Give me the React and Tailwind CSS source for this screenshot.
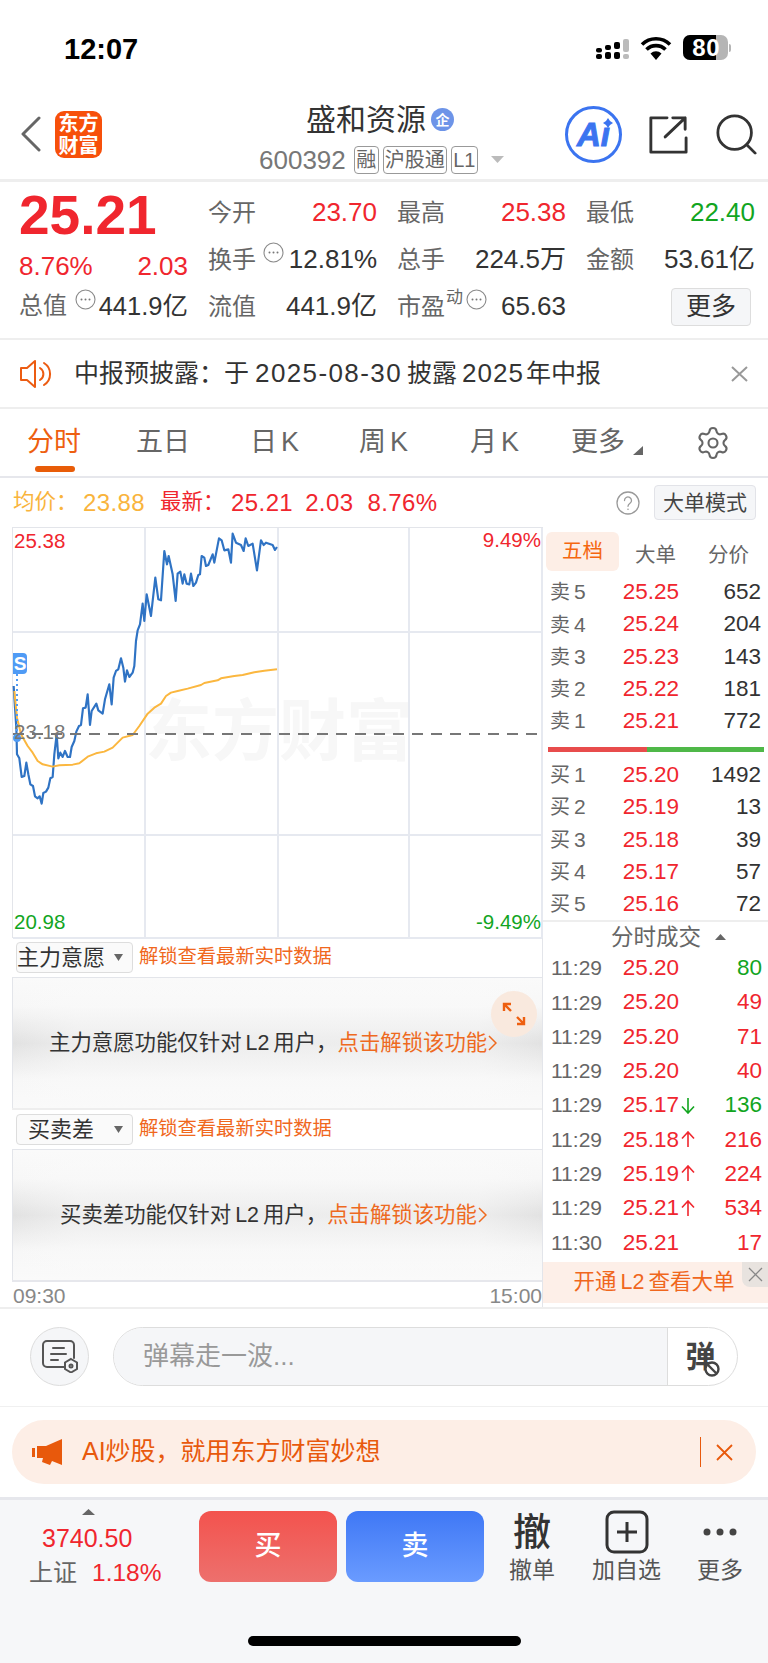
import { Settings } from 'lucide-react';

const RED = 'text-[#f0262e]';
const GREEN = 'text-[#12a51f]';

const SELLS = [
  ['卖', '5', '25.25', '652'],
  ['卖', '4', '25.24', '204'],
  ['卖', '3', '25.23', '143'],
  ['卖', '2', '25.22', '181'],
  ['卖', '1', '25.21', '772'],
];
const BUYS = [
  ['买', '1', '25.20', '1492'],
  ['买', '2', '25.19', '13'],
  ['买', '3', '25.18', '39'],
  ['买', '4', '25.17', '57'],
  ['买', '5', '25.16', '72'],
];
const TRADES = [
  ['11:29', '25.20', '', '80', 'g'],
  ['11:29', '25.20', '', '49', 'r'],
  ['11:29', '25.20', '', '71', 'r'],
  ['11:29', '25.20', '', '40', 'r'],
  ['11:29', '25.17', 'd', '136', 'g'],
  ['11:29', '25.18', 'u', '216', 'r'],
  ['11:29', '25.19', 'u', '224', 'r'],
  ['11:29', '25.21', 'u', '534', 'r'],
  ['11:30', '25.21', '', '17', 'r'],
];

// traced from the reference, in crop coordinates (see transform on the <g>)
const BLUE_LINE = '38,495 42,560 46,620 48,700 55,712 62,768 70,765 76,725 82,760 88,790 96,795 102,826 110,832 116,826 122,848 127,816 135,812 142,800 148,772 155,768 160,700 167,640 172,712 178,695 185,708 192,690 200,708 207,708 212,678 220,660 226,632 234,615 240,612 246,562 254,560 260,520 267,612 272,570 286,548 292,568 305,578 312,535 325,490 332,550 338,470 345,450 352,445 360,412 367,440 372,482 378,448 385,468 395,455 400,435 405,360 410,328 417,310 425,248 430,300 437,220 450,285 463,170 472,235 480,238 490,90 498,130 503,105 515,160 524,240 530,158 538,152 545,188 550,160 557,188 565,190 570,158 577,195 585,185 592,162 597,160 602,105 610,110 615,135 622,132 635,100 640,125 654,52 662,58 670,88 682,85 690,125 695,38 705,65 720,72 728,90 734,52 742,75 755,68 768,148 780,58 788,72 795,65 815,72 822,87 828,78';
const AVG_LINE = '40,510 48,590 60,640 80,675 95,695 110,720 125,730 155,737 175,733 215,731 235,727 262,706 285,697 310,692 335,680 365,650 395,642 415,615 440,578 460,560 480,548 495,525 510,515 530,510 560,503 600,492 610,486 650,478 660,472 700,465 725,462 760,454 790,449 828,445';

const Dots = ({ className = '' }) => (
  <svg width="21" height="21" viewBox="0 0 21 21" className={`shrink-0 ${className}`}>
    <circle cx="10.5" cy="10.5" r="9.5" fill="none" stroke="#8a8a8a" strokeWidth="1.1" />
    <circle cx="6.5" cy="10.5" r="1" fill="#777" />
    <circle cx="10.5" cy="10.5" r="1" fill="#777" />
    <circle cx="14.5" cy="10.5" r="1" fill="#777" />
  </svg>
);

const Stat = ({ label, children, value, color = 'text-[#333]' }) => (
  <div className="flex h-[47px] items-center">
    <span className="text-[24px] text-[#666]">{label}</span>
    {children}
    <span className={`ml-auto text-[26px] ${color}`}>{value}</span>
  </div>
);

const Tag = ({ children, className = '' }) => (
  <span className={`flex h-[28px] items-center justify-center rounded-[4px] border border-[#999] text-[20px] text-[#666] ${className}`}>
    {children}
  </span>
);

const BookRow = ({ row }) => (
  <div className="flex h-[32.2px] items-center pl-[7px] pr-[7px]">
    <span className="w-[71px] text-[20px] text-[#666]">
      {row[0]}
      <span className="ml-[4px] text-[21px]">{row[1]}</span>
    </span>
    <span className={`w-[58px] text-right text-[22.500px] ${RED}`}>{row[2]}</span>
    <span className="flex-1 text-right text-[22.500px] text-[#333]">{row[3]}</span>
  </div>
);

const TradeRow = ({ row }) => (
  <div className="flex h-[34.3px] items-center pl-[8px] pr-[6px]">
    <span className="w-[64px] text-[21px] text-[#666]">{row[0]}</span>
    <span className={`w-[64px] text-right text-[22.500px] ${RED}`}>{row[1]}</span>
    <span className="flex w-[17px] justify-center">
      {row[2] === 'd' && (
        <svg width="14" height="17" viewBox="0 0 14 17" fill="none" stroke="#12a51f" strokeWidth="1.6">
          <path d="M7 1v15M1 9.500 7 16l6-6.500" />
        </svg>
      )}
      {row[2] === 'u' && (
        <svg width="14" height="17" viewBox="0 0 14 17" fill="none" stroke="#f0262e" strokeWidth="1.6">
          <path d="M7 16V1M1 7.500 7 1l6 6.500" />
        </svg>
      )}
    </span>
    <span className={`flex-1 text-right text-[22.500px] ${row[4] === 'g' ? GREEN : RED}`}>{row[3]}</span>
  </div>
);

const Caret = () => (
  <svg width="9" height="7" viewBox="0 0 9 7" className="ml-[9px] shrink-0">
    <path d="M0 0h9L4.500 7z" fill="#666" />
  </svg>
);

const LockedPanel = ({ name, before, after, indent, children }) => (
  <>
    <div className="flex h-[39px] items-center pl-[4px]">
      <div className="flex h-[31px] w-[117px] items-center rounded-[4px] border border-[#ddd] bg-[#fafafa]">
        <span className="w-[88px] text-center text-[22px] leading-none text-[#333]">{name}</span>
        <Caret />
      </div>
      <span className="ml-[6px] text-[19.300px] text-[#f0671d]">解锁查看最新实时数据</span>
    </div>
    <div className={`relative flex h-[131px] items-center border-l border-t border-[#e3e5ea] bg-[linear-gradient(to_right,rgba(250,250,250,0)_0%,rgba(250,250,250,0.45)_12%,rgba(250,250,250,0.45)_88%,rgba(250,250,250,0)_100%),linear-gradient(to_bottom,#fafafa_0%,#f7f7f7_22%,#e2e2e2_50%,#f7f7f7_78%,#fafafa_100%)] ${indent}`}>
      <span className="text-[21.400px] text-[#333]">
        {before}
        <span className="mx-[4px]">L2</span>
        {after}
      </span>
      <span className="flex items-center text-[21.400px] text-[#ee6a1f]">
        点击解锁该功能
        <svg width="9" height="20" viewBox="0 0 9 20" fill="none" stroke="#ee6a1f" strokeWidth="1.500" className="ml-[1px]">
          <path d="m1 3 7 7-7 7" />
        </svg>
      </span>
      {children}
    </div>
  </>
);

const BarAction = ({ icon, label, className = '' }) => (
  <div className={`flex flex-col items-center ${className}`}>
    <div className="flex h-[46px] items-center justify-center">{icon}</div>
    <span className="text-[23px] leading-[30px] text-[#555]">{label}</span>
  </div>
);

export default function App() {
  return (
    <div className="flex h-[1663px] w-[768px] flex-col overflow-hidden bg-white [font-family:'Liberation_Sans','Noto_Sans_CJK_SC',sans-serif]">
      {/* Status bar */}
      <div className="flex h-[90px] shrink-0 items-start pl-[64px] pt-[31px]">
        <span className="text-[29px] font-bold leading-[36px] text-black">12:07</span>
        <div className="ml-auto mr-[37px] mt-[4px] flex items-center">
          <svg width="34" height="20" viewBox="0 0 34 20" className="mt-[3px]">
            <g fill="#000">
              <rect x="0" y="9" width="6" height="4.500" rx="2" />
              <rect x="0" y="15" width="6" height="5" rx="2" />
              <rect x="9" y="6" width="6" height="5" rx="2" />
              <rect x="9" y="13" width="6" height="7" rx="2" />
              <rect x="18" y="3" width="6" height="7" rx="2" />
              <rect x="18" y="13" width="6" height="7" rx="2" />
            </g>
            <g fill="#bbb">
              <rect x="27" y="0" width="6" height="13" rx="2" />
              <rect x="27" y="15" width="6" height="5" rx="2" />
            </g>
          </svg>
          <svg width="32" height="24" viewBox="0 0 32 24" className="ml-[10px]">
            <path d="M16 24 10.500 17.500a8 8 0 0 1 11 0z" fill="#000" />
            <path d="M6.500 13.500a13.500 13.500 0 0 1 19 0" fill="none" stroke="#000" strokeWidth="3.600" />
            <path d="M2 8.500a20 20 0 0 1 28 0" fill="none" stroke="#000" strokeWidth="3.600" />
          </svg>
          <div className="ml-[11px] flex h-[25px] w-[45px] overflow-hidden rounded-[7px] bg-[#b5b5b5]">
            <div className="flex w-[33px] items-center justify-end overflow-visible bg-black">
              <span className="relative z-10 -mr-[4px] text-[24px] font-bold leading-none tracking-[0.5px] text-white">80</span>
            </div>
          </div>
          <div className="ml-[1px] h-[8px] w-[2px] rounded-r bg-[#b5b5b5]" />
        </div>
      </div>

      {/* Header */}
      <div className="flex h-[92px] shrink-0 items-center border-b-[3px] border-[#eeeeee]">
        <svg width="22" height="36" viewBox="0 0 22 36" fill="none" stroke="#666" strokeWidth="3" className="ml-[20px] -mt-[2px]">
          <path d="M19 2 3 18l16 16" strokeLinecap="round" strokeLinejoin="round" />
        </svg>
        <div className="ml-[13px] flex h-[47px] w-[47px] flex-col items-center justify-center rounded-[9px] bg-[#f7500a] text-[20px] font-bold leading-[22px] text-white">
          <span>东方</span>
          <span>财富</span>
        </div>
        <div className="ml-[157px] mt-[7px] flex w-[306px] flex-col items-start">
          <div className="ml-[47px] flex items-center">
            <span className="text-[30px] leading-[36px] text-[#333]">盛和资源</span>
            <span className="ml-[5px] flex h-[23px] w-[23px] items-center justify-center rounded-full bg-[#6d94e8] text-[14px] font-bold leading-none text-white">企</span>
          </div>
          <div className="mt-[7px] flex items-center">
            <span className="text-[26px] leading-[30px] text-[#777]">600392</span>
            <Tag className="ml-[8px] w-[25px]">融</Tag>
            <Tag className="ml-[4px] w-[64px]">沪股通</Tag>
            <Tag className="ml-[4px] w-[27px]">L1</Tag>
            <svg width="13" height="7" viewBox="0 0 13 7" className="ml-[13px]">
              <path d="M0 0h13L6.500 7z" fill="#bbb" />
            </svg>
          </div>
        </div>
        <div className="relative flex h-[57px] w-[57px] items-center justify-center rounded-full border-[3px] border-[#3b74f0]">
          <span className="text-[33px] font-bold italic leading-none text-[#3b74f0] [-webkit-text-stroke:1px_#3b74f0]">Aı</span>
          <svg width="10" height="10" viewBox="0 0 10 10" className="absolute left-[35px] top-[9px]">
            <path d="M5 0 7 3 10 5 7 7 5 10 3 7 0 5 3 3z" fill="#3b74f0" />
          </svg>
        </div>
        <svg width="40" height="40" viewBox="0 0 42 42" fill="none" stroke="#333" strokeWidth="3" className="ml-[26px]" strokeLinecap="round" strokeLinejoin="round">
          <path d="M20 3H3v36h37V24" />
          <path d="M18 23 39 3M26 3h13v12" />
        </svg>
        <svg width="41" height="41" viewBox="0 0 44 44" fill="none" stroke="#333" strokeWidth="3" className="ml-[28px]" strokeLinecap="round">
          <circle cx="20" cy="20" r="18" />
          <path d="m33 33 9 9" />
        </svg>
      </div>

      {/* Quote panel */}
      <div className="flex h-[158px] shrink-0 border-b-[2px] border-[#eeeeee] pl-[19px]">
        <div className="w-[169px]">
          <div className={`mt-[2px] text-[55px] font-bold leading-[62px] ${RED}`}>25.21</div>
          <div className={`mt-[1px] flex h-[38px] items-center justify-between text-[26px] ${RED}`}>
            <span>8.76%</span>
            <span>2.03</span>
          </div>
          <div className="flex h-[42px] items-center">
            <span className="text-[24px] text-[#666]">总值</span>
            <Dots className="-mt-[14px] ml-[8px]" />
            <span className="ml-auto text-[25.500px] text-[#333]">441.9亿</span>
          </div>
        </div>
        <div className="ml-[20px] mt-[7px] grid h-[141px] w-[547px] grid-cols-3 gap-x-[20px]">
          <Stat label="今开" value="23.70" color={RED} />
          <Stat label="最高" value="25.38" color={RED} />
          <Stat label="最低" value="22.40" color={GREEN} />
          <Stat label="换手" value="12.81%">
            <Dots className="-mt-[14px] ml-[7px]" />
          </Stat>
          <Stat label="总手" value="224.5万" />
          <Stat label="金额" value="53.61亿" />
          <Stat label="流值" value="441.9亿" />
          <Stat label="市盈" value="65.63">
            <span className="-mt-[18px] ml-[1px] text-[17px] leading-none text-[#666]">动</span>
            <Dots className="-mt-[14px] ml-[3px]" />
          </Stat>
          <div className="flex items-center justify-end pr-[4px]">
            <div className="flex h-[38px] w-[80px] items-center justify-center rounded-[4px] border border-[#ddd] bg-[#f5f6f8] text-[25px] text-[#333]">更多</div>
          </div>
        </div>
      </div>

      {/* Notice */}
      <div className="flex h-[69px] shrink-0 items-center border-b-[2px] border-[#eeeeee] pl-[20px]">
        <svg width="33" height="30" viewBox="0 0 33 30" fill="none" stroke="#ec5c12" strokeWidth="2">
          <path d="M1 9h6l8-7v26l-8-7H1z" strokeLinejoin="round" />
          <path d="M20 9a7 7 0 0 1 0 12M24 4a13 13 0 0 1 0 22" strokeLinecap="round" />
        </svg>
        <span className="ml-[21px] flex items-center text-[25px] text-[#333]">
          中报预披露：于
          <span className="ml-[6px] text-[26px] tracking-[1.4px]">2025-08-30</span>
          <span className="ml-[5px]">披露</span>
          <span className="ml-[5px] text-[26px] tracking-[1px]">2025</span>
          <span className="ml-[2px]">年中报</span>
        </span>
        <svg width="17" height="16" viewBox="0 0 17 16" stroke="#999" strokeWidth="2" className="ml-auto mr-[20px]">
          <path d="m1 1 15 14M16 1 1 15" />
        </svg>
      </div>

      {/* Tabs */}
      <div className="flex h-[69px] shrink-0 items-center border-b-[2px] border-[#e6e7ec] text-[27px] text-[#666]">
        <div className="relative ml-[27px] w-[109px] text-[#ee5f10]">
          分时
          <div className="absolute left-[8px] top-[44px] h-[6px] w-[40px] rounded-full bg-[#e85c08]" />
        </div>
        <span className="w-[116px]">五日</span>
        <span className="-ml-[2px] w-[109px]">日<span className="ml-[4px]">K</span></span>
        <span className="w-[111px]">周<span className="ml-[4px]">K</span></span>
        <span className="w-[101px]">月<span className="ml-[4px]">K</span></span>
        <span>更多</span>
        <svg width="10" height="9" viewBox="0 0 10 9" className="ml-[8px] mt-[16px]">
          <path d="M10 0v9H0z" fill="#666" />
        </svg>
        <Settings size={36} strokeWidth={1.400} className="ml-[52px] text-[#666]" />
      </div>

      {/* Info row */}
      <div className="flex h-[49px] shrink-0 items-center pl-[13px] text-[24px] tracking-[0.4px]">
        <span className="w-[70px] text-[21.500px] tracking-normal text-[#f9b43c]">均价：</span>
        <span className="text-[#f9b43c]">23.88</span>
        <span className={`ml-[15px] w-[71px] text-[21.500px] tracking-normal ${RED}`}>最新：</span>
        <span className={RED}>25.21</span>
        <span className={`ml-[12px] ${RED}`}>2.03</span>
        <span className={`ml-[14px] ${RED}`}>8.76%</span>
        <svg width="24" height="24" viewBox="0 0 24 24" fill="none" stroke="#999" strokeWidth="1.300" className="ml-auto mr-[14px]">
          <circle cx="12" cy="12" r="11" />
          <path d="M8.500 9.500a3.500 3.500 0 1 1 5.500 2.800c-1.200.9-2 1.500-2 3" strokeLinecap="round" />
          <circle cx="12" cy="18.200" r=".8" fill="#999" stroke="none" />
        </svg>
        <div className="mr-[12px] flex h-[35px] w-[102px] items-center justify-center rounded-[4px] border border-[#e2e3e8] bg-[#f5f6f8] text-[21px] tracking-normal text-[#444]">大单模式</div>
      </div>

      {/* Main: chart + order book */}
      <div className="flex h-[782px] shrink-0 border-b-[2px] border-[#eeeeee]">
        <div className="ml-[12px] w-[530px]">
          <div className="relative h-[411px] border-l border-t border-[#e3e5ea]">
            <div className="pointer-events-none absolute left-[132px] top-[170px] text-[67px] font-bold leading-none text-[#f7f7f7]">东方财富</div>
            <svg width="529" height="411" viewBox="0 0 529 411" className="absolute inset-0 overflow-visible">
              <g stroke="#e6e9f0" strokeWidth="2" fill="none">
                <path d="M0 104h529M0 307h529M0 410h529" />
                <path d="M132 0v410M265 0v410M396 0v410M529 0v410" />
              </g>
              <g transform="translate(-12,-7) scale(0.3333)" fill="none" strokeLinejoin="round">
                <polyline points={BLUE_LINE} stroke="#2f73c4" strokeWidth="6.500" />
                <polyline points={AVG_LINE} stroke="#fbb73f" strokeWidth="6" />
              </g>
              <path d="M0 206h525" stroke="#777" strokeWidth="2" strokeDasharray="11 8" />
              <path d="M4 146v60" stroke="#4f9bf5" strokeWidth="2" strokeDasharray="2 3" />
              <circle cx="4" cy="210" r="4" fill="#4f9bf5" />
            </svg>
            <div className="absolute left-0 top-[125px] flex h-[21px] w-[14px] items-center justify-center rounded-r-[4px] bg-[#4f9bf5] text-[19px] font-bold leading-none text-white">S</div>
            <span className={`absolute left-[1px] top-[-2px] text-[20.500px] ${RED}`}>25.38</span>
            <span className={`absolute right-[1px] top-[-3px] text-[20.500px] ${RED}`}>9.49%</span>
            <span className="absolute left-[1px] top-[189px] text-[20.500px] text-[#777]">23.18</span>
            <span className={`absolute bottom-[0px] left-[1px] text-[20.500px] ${GREEN}`}>20.98</span>
            <span className={`absolute bottom-[0px] right-[1px] text-[20.500px] ${GREEN}`}>-9.49%</span>
          </div>
          <LockedPanel name="主力意愿" before="主力意愿功能仅针对" after="用户，" indent="pl-[36px]">
            <div className="absolute right-[5px] top-[13px] flex h-[46px] w-[46px] items-center justify-center rounded-full bg-[#f9e9de]">
              <svg width="24" height="24" viewBox="0 0 24 24" fill="none" stroke="#ee5f10" strokeWidth="2.400">
                <path d="M2 9V2h7M2 2l7 7M22 15v7h-7M22 22l-7-7" />
              </svg>
            </div>
          </LockedPanel>
          <div className="h-[2px] bg-[#eeeeee]" />
          <LockedPanel name="买卖差" before="买卖差功能仅针对" after="用户，" indent="pl-[47px]" />
          <div className="h-[2px] bg-[#e6e7ec]" />
          <div className="flex h-[28px] items-center justify-between text-[21px] text-[#888]">
            <span className="ml-[1px]">09:30</span>
            <span>15:00</span>
          </div>
        </div>

        <div className="w-[226px] border-l border-[#e3e5ea]">
          <div className="flex h-[49px] items-start pl-[3px] pt-[5px] text-[20.500px] text-[#666]">
            <div className="flex h-[39px] w-[73px] items-center justify-center rounded-[6px] bg-[#fdeee6] text-[#f5670f]">五档</div>
            <span className="ml-[16px] mt-[8px]">大单</span>
            <span className="ml-[32px] mt-[8px]">分价</span>
          </div>
          {SELLS.map((r) => (
            <BookRow key={r[1]} row={r} />
          ))}
          <div className="mx-[5px] mt-[10px] flex h-[5px] w-[216px]">
            <div className="w-[99px] bg-[#e84c4c]" />
            <div className="flex-1 bg-[#4fb848]" />
          </div>
          <div className="h-[7px]" />
          {BUYS.map((r) => (
            <BookRow key={r[1]} row={r} />
          ))}
          <div className="h-[2px] bg-[#eeeeee]" />
          <div className="flex h-[31px] items-center justify-center pl-[26px] text-[22.500px] text-[#666]">
            分时成交
            <svg width="11" height="6" viewBox="0 0 11 6" className="ml-[14px]">
              <path d="M0 6h11L5.500 0z" fill="#666" />
            </svg>
          </div>
          <div className="-mt-[2px] mb-[2px]">
            {TRADES.map((r, i) => (
              <TradeRow key={i} row={r} />
            ))}
          </div>
          <div className="relative flex h-[41px] items-center justify-center bg-[#fdefe8] pr-[3px] text-[21.500px] text-[#f0671d]">
            开通<span className="mx-[4px]">L2</span>查看大单
            <div className="absolute right-0 top-0 flex h-[25px] w-[26px] items-center justify-center rounded-bl-[8px] bg-[#e8e3df]">
              <svg width="15" height="15" viewBox="0 0 15 15" stroke="#888" strokeWidth="1.300">
                <path d="m1 1 13 13M14 1 1 14" />
              </svg>
            </div>
          </div>
        </div>
      </div>

      {/* Danmaku input */}
      <div className="flex h-[98px] shrink-0 items-center border-b border-[#f0f0f0] pl-[30px] pb-[2px]">
        <div className="flex h-[59px] w-[59px] items-center justify-center rounded-full border border-[#ddd] bg-[#f5f6f8]">
          <svg width="36" height="33" viewBox="0 0 36 33" fill="none" stroke="#555" strokeWidth="2" strokeLinecap="round">
            <path d="M22 27H5a4 4 0 0 1-4-4V5a4 4 0 0 1 4-4h23a4 4 0 0 1 4 4v13" />
            <path d="M11 8h11M9 14h15M9 20h7" />
            <path d="m29 19 6 3.500v6.500l-6 3.500-6-3.500v-6.500z" />
            <circle cx="29" cy="26" r="1.500" />
          </svg>
        </div>
        <div className="ml-[24px] flex h-[59px] w-[625px] overflow-hidden rounded-full border border-[#ddd]">
          <div className="flex flex-1 items-center border-r border-[#ddd] bg-[#f5f6f8] pl-[29px] text-[26px] text-[#999]">弹幕走一波...</div>
          <div className="relative flex w-[69px] items-center justify-center pr-[4px] text-[30px] font-bold leading-none text-[#444]">
            弹
            <svg width="16" height="16" viewBox="0 0 16 16" fill="#fff" stroke="#444" strokeWidth="2.400" className="absolute left-[36px] top-[33px]">
              <circle cx="8" cy="8" r="6.500" />
              <path d="m4 4 8 8" />
            </svg>
          </div>
        </div>
      </div>

      {/* AI banner */}
      <div className="h-[93px] shrink-0 border-b-[3px] border-[#e6e7ec] px-[12px] pt-[13px]">
        <div className="flex h-[64px] w-[744px] items-center rounded-full bg-[#fdeee6] pl-[20px]">
          <svg width="31" height="27" viewBox="0 0 31 27" fill="#e8590c">
            <path d="M0 9h3v9H0zM5 7h9L30 0v26L20 22l-2 4-8-3 1-4H5z" />
          </svg>
          <span className="ml-[19px] text-[25px] text-[#e8590c]">AI炒股，就用东方财富妙想</span>
          <div className="ml-auto h-[30px] w-px bg-[#e8590c]" />
          <svg width="17" height="17" viewBox="0 0 17 17" stroke="#e8590c" strokeWidth="1.800" className="ml-[15px] mr-[23px]">
            <path d="m1 1 15 15M16 1 1 16" />
          </svg>
        </div>
      </div>

      {/* Bottom bar */}
      <div className="relative flex-1 bg-[#f6f7f9]">
        <div className="flex items-start pt-[9px]">
          <div className="flex w-[199px] flex-col pl-[29px]">
            <svg width="13" height="6" viewBox="0 0 13 6" className="ml-[53px]">
              <path d="M0 6h13L6.500 0z" fill="#666" />
            </svg>
            <span className={`ml-[13px] mt-[8px] text-[25px] leading-[30px] ${RED}`}>3740.50</span>
            <div className="mt-[2px] flex items-center leading-[36px]">
              <span className="text-[24px] text-[#666]">上证</span>
              <span className={`ml-[15px] text-[24.500px] ${RED}`}>1.18%</span>
            </div>
          </div>
          <div className="mt-[2px] flex h-[71px] w-[138px] items-center justify-center rounded-[12px] bg-[linear-gradient(to_bottom,#f3534e,#ed706d)] text-[27px] font-medium text-white">买</div>
          <div className="ml-[9px] mt-[2px] flex h-[71px] w-[138px] items-center justify-center rounded-[12px] bg-[linear-gradient(to_bottom,#3f78f5,#6a9bff)] text-[27px] font-medium text-white">卖</div>
          <BarAction
            className="ml-[25px]"
            label="撤单"
            icon={<span className="text-[38px] font-medium leading-none text-[#333]">撤</span>}
          />
          <BarAction
            className="ml-[37px]"
            label="加自选"
            icon={
              <svg width="44" height="44" viewBox="0 0 44 44" fill="none" stroke="#333" strokeWidth="3">
                <rect x="2" y="2" width="40" height="40" rx="7" />
                <path d="M22 12v20M12 22h20" />
              </svg>
            }
          />
          <BarAction
            className="ml-[36px]"
            label="更多"
            icon={
              <svg width="34" height="8" viewBox="0 0 34 8" fill="#444">
                <circle cx="4" cy="4" r="3.500" />
                <circle cx="17" cy="4" r="3.500" />
                <circle cx="30" cy="4" r="3.500" />
              </svg>
            }
          />
        </div>
        <div className="absolute bottom-[17px] left-[248px] h-[10px] w-[273px] rounded-full bg-black" />
      </div>
    </div>
  );
}
